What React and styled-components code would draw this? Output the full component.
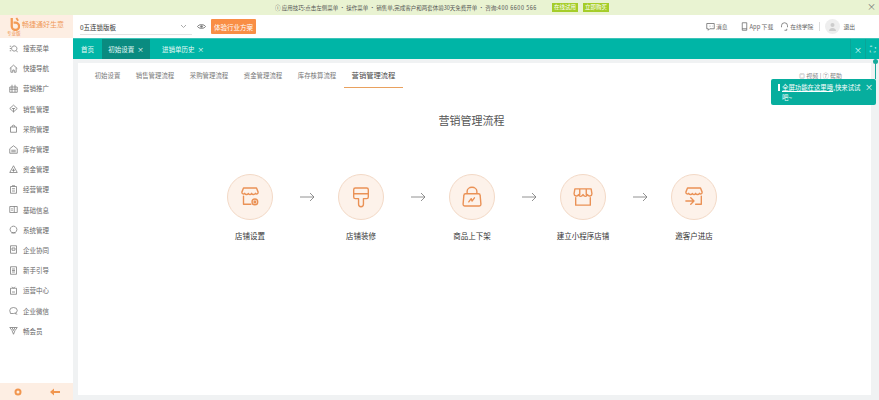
import React from 'react';
import styled, { createGlobalStyle } from 'styled-components';

const Global = createGlobalStyle`
  html, body { margin: 0; padding: 0; width: 879px; height: 400px; overflow: hidden; background: #fff; }
  #root { width: 879px; height: 400px; }
  * { box-sizing: border-box; }
  body { font-family: "Noto Sans CJK SC", "Liberation Sans", sans-serif; color: #333; }
`;

const Page = styled.div`display: flex; flex-direction: column; width: 879px; height: 400px; overflow: hidden; position: relative;`;
const Banner = styled.div`
  height: 15px; background: #e9f3d2; display: flex; align-items: center; flex: none;
  padding-left: 275px; font-size: 5.5px; color: #555; white-space: nowrap; position: relative;
`;
const BannerText = styled.span`width: 277px; flex: none; overflow: hidden;`;
const Phone = styled.span`letter-spacing: .5px;`;
const BannerBtn = styled.span`
  height: 9px; width: 26px; margin-right: 5px; background: #a5cd28; color: #fff; font-size: 5.5px;
  line-height: 9px; text-align: center; display: inline-block;
`;
const BannerClose = styled.span`position: absolute; right: 3px; top: 0; font-size: 9px; line-height: 14px; color: #777;`;
const Body = styled.div`flex: 1; display: flex; min-height: 0;`;
const Side = styled.aside`width: 73px; flex: none; display: flex; flex-direction: column; background: #fff;`;
const Logo = styled.div`
  height: 23px; background: #fdeee3; display: flex; padding: 2px 0 0 9px; position: relative; flex: none;
`;
const LogoTitle = styled.span`font-size: 7px; color: #f09a5a; margin: 3px 0 0 2px; white-space: nowrap; line-height: 9px;`;
const LogoSub = styled.span`position: absolute; left: 7px; top: 14px; font-size: 4.5px; color: #ee8c45; line-height: 8px;`;
const Menu = styled.nav`flex: 1; display: flex; flex-direction: column;`;
const MenuItem = styled.div`
  height: 20.2px; display: flex; align-items: center; padding-left: 9px; gap: 5px; font-size: 6.5px; color: #666; white-space: nowrap;
  svg { width: 9px; height: 9px; flex: none; stroke: #777; fill: none; stroke-width: 1; }
`;
const SideFoot = styled.div`height: 17px; background: #fdeee3; display: flex; align-items: center; justify-content: space-between; padding: 0 13px 0 14px; flex: none;`;
const Main = styled.div`flex: 1; display: flex; flex-direction: column; min-width: 0; background: #f0f2f3;`;
const Header = styled.header`height: 23px; background: #fff; display: flex; align-items: center; flex: none; padding-left: 7px; position: relative;`;
const Select = styled.div`
  width: 112px; height: 15px; border-bottom: 1px solid #e3e3e3; font-size: 6.5px; color: #333; display: flex; align-items: center; justify-content: space-between; padding: 0 5px 0 0; margin-top: 1px;
`;
const EyeIcon = styled.svg`margin-left: 5px; flex: none;`;
const Trial = styled.button`
  margin-left: 5px; width: 45px; height: 15px; background: #f98e45; border: 0; border-radius: 1px; color: #fff; font: 6.5px "Noto Sans CJK SC", sans-serif; padding: 0;
`;
const HeadRight = styled.div`margin-left: auto; display: flex; align-items: center; font-size: 5.8px; color: #666; padding-right: 24px;`;
const HeadItem = styled.span`display: flex; align-items: center; gap: ${p => p.$gap || 1}px; margin-right: ${p => p.$mr}px; white-space: nowrap; svg { width: 9px; height: 9px; stroke: #666; fill: none; stroke-width: 1; }`;
const Divider = styled.span`width: 1px; height: 9px; background: #ddd; margin-right: 5px;`;
const Avatar = styled.span`width: 15px; height: 15px; border-radius: 50%; background: #eee; margin-right: 3px; display: flex; align-items: center; justify-content: center;`;
const TabBar = styled.div`height: 21px; background: #00b5a6; display: flex; align-items: stretch; flex: none; border-top: 1px solid #3cc4b8; color: #e8fbf8; font-size: 6.5px;`;
const Tab = styled.div`
  display: flex; align-items: center; justify-content: center; width: ${p => p.$w}px; background: ${p => p.$on ? '#0a8b80' : 'transparent'}; gap: 3px; white-space: nowrap;
`;
const TabTools = styled.div`margin-left: auto; display: flex; align-items: stretch;`;
const Tool = styled.div`width: ${p => p.$w}px; display: flex; align-items: center; justify-content: center; border-left: 1px solid #0aa598; font-size: 8px; color: #dff;`;
const Content = styled.div`flex: 1; padding: 4px 8px 5px 5px; display: flex; min-height: 0; position: relative;`;
const Panel = styled.section`flex: 1; background: #fff; position: relative; display: flex; flex-direction: column;`;
const SubTabs = styled.div`display: flex; height: 25px; padding-left: 9px; align-items: stretch; flex: none;`;
const SubTab = styled.div`
  width: ${p => p.$w}px; font-size: ${p => p.$on ? 7.3 : 6.4}px; color: ${p => p.$on ? '#444' : '#777'}; display: flex; align-items: center; justify-content: center; white-space: nowrap;
  border-bottom: 1px solid ${p => p.$on ? '#e9a15f' : 'transparent'};
`;
const Title = styled.h2`margin: 25px 0 0; font-weight: 400; font-size: 11px; line-height: 15px; text-align: center; color: #555; padding-right: 6px; flex: none;`;
const Flow = styled.div`display: flex; justify-content: flex-start; margin-top: 46px; padding-left: 137px;`;
const Step = styled.div`width: 70px; display: flex; flex-direction: column; align-items: center; flex: none;`;
const Circle = styled.div`width: 46px; height: 46px; border-radius: 50%; background: #fdf2ea; border: 1px solid #f3d9c6; display: flex; align-items: center; justify-content: center; svg { width: 26px; height: 26px; fill: none; stroke: #ea9155; stroke-width: 1.7; stroke-linejoin: round; stroke-linecap: round; }`;
const StepLabel = styled.div`margin-top: 10px; font-size: 7.5px; line-height: 11px; color: #333; white-space: nowrap;`;
const Arrow = styled.div`width: 41px; height: 46px; padding-left: 3px; display: flex; align-items: center; justify-content: center; flex: none; svg { width: 15px; height: 10px; fill: none; stroke: #777; stroke-width: .8; }`;
const PanelTools = styled.div`position: absolute; right: 29px; top: 9px; font-size: 6px; line-height: 7px; color: #888; white-space: nowrap;`;
const Tip = styled.div`
  position: absolute; left: 771px; top: 79px; width: 105px; height: 26px; background: #07ae9e; border-radius: 2px; color: #fff; font-size: 6.4px; line-height: 9.500px; padding: 4px 10px 0 11px; z-index: 2;
  &::before { content: ''; position: absolute; left: 7px; top: 5px; width: 2px; height: 7px; background: #fff; }
`;
const TipRow = styled.div`white-space: nowrap;`;
const TipLink = styled.span`text-decoration: underline;`;
const TipClose = styled.span`position: absolute; right: 3px; top: 3px; font-size: 8px;`;
const TipLine = styled.span`position: absolute; left: 875px; top: 61px; width: 1px; height: 18px; background: #16a99b; z-index: 2;`;
const TipDot = styled.span`position: absolute; left: 873px; top: 59px; width: 5px; height: 5px; border-radius: 50%; background: #16a99b; z-index: 2;`;

const Ic = ({ d }) => <svg viewBox="0 0 12 12"><path d={d} /></svg>;
const menu = [
  ['搜索菜单', 'M1 3h2M1 6h2M1 9h2M7 2.500a3.500 3.500 0 1 1-.01 0M9.500 8.500l2 2.500'],
  ['快捷导航', 'M1 6l5-4.500L11 6M2.500 5v6h2.500V8h2v3h2.500V5'],
  ['营销推广', 'M1 4h10v7H1zM4 1v10M8 1v10M1 7h10'],
  ['销售管理', 'M1 6l5-4.500L11 6l-5 4.500zM4 6h4M6 6v5'],
  ['采购管理', 'M2 4h8v7H2zM4 4a2 2.500 0 0 1 4 0'],
  ['库存管理', 'M1 5l5-4 5 4v6H1zM3 7h6M3 9h6'],
  ['资金管理', 'M6 1l5 9H1zM4 7h4M6 5v4'],
  ['经营管理', 'M2 2h8v9H2zM4 5h4M4 8h4M4 1h4'],
  ['基础信息', 'M1 2h10v8H1zM3 5h2M3 7h2M7 2v8'],
  ['系统管理', 'M6 1.500a4.500 4.500 0 1 1-.01 0M3 10.500h6'],
  ['企业协同', 'M2 1h8v10H2zM4 4h4v3H4z'],
  ['新手引导', 'M2 1h8v10H2zM4 4h4M4 6h4M4 8h4'],
  ['运营中心', 'M2 3h8v8H2zM4 1l2 2 2-2M4 8h4'],
  ['企业微信', 'M1 6a5 4 0 1 1 5 4H2zM8 10l3 1'],
  ['畅会员', 'M1 2h10L8 6l-2 5-2-5zM4 2l2 4 2-4'],
];
const Store = () => <path d="M6 10L8 5h16l2 5c0 2.500-2 3-3.300 1.500C21.500 13.500 19 13.500 18 11.500c-1 2-3.500 2-4 0-1 2-3.500 2-4.500 0C8.500 13 6 12.500 6 10z" />;
const icons = [
  <svg viewBox="0 0 32 32" key="a"><Store /><path d="M8 15v10h9" /><circle cx="22" cy="22" r="3.500" /><circle cx="22" cy="22" r="1" /></svg>,
  <svg viewBox="0 0 32 32" key="b"><path d="M7 7a2 2 0 0 1 2-2h14a2 2 0 0 1 2 2v9a2 2 0 0 1-2 2h-4v7a3 3 0 0 1-6 0v-7H9a2 2 0 0 1-2-2zM7 12h18" /></svg>,
  <svg viewBox="0 0 32 32" key="c"><path d="M8 12h16a2 2 0 0 1 2 2l1 11a2 2 0 0 1-2 2H7a2 2 0 0 1-2-2l1-11a2 2 0 0 1 2-2zM10 12V9a6 5 0 0 1 12 0v3M12 22l3-4 1 3 3-4" /></svg>,
  <svg viewBox="0 0 32 32" key="d"><path d="M6 6h20l1 6c0 3-4 4-5.500 1-1 3-4 3-5.500 0-1.500 3-4.500 3-5.500 0C9.500 16 5 15 5 12zM12 6v7M20 6v7M7 17v9h18v-9" /></svg>,
  <svg viewBox="0 0 32 32" key="e"><Store /><path d="M25 15v10H18M6 21h10M12 17l4 4-4 4" /></svg>,
];
const steps = ['店铺设置', '店铺装修', '商品上下架', '建立小程序店铺', '邀客户进店'];

export default function App() {
  return (
    <Page>
      <Global />
      <Banner>
        <BannerText>ⓘ 应用技巧:点击左侧菜单 • 操作菜单 • 销售单,完成客户和两套体验30天免费开单 • 咨询:<Phone>400 6600 566</Phone></BannerText>
        <BannerBtn>在线试用</BannerBtn>
        <BannerBtn>立即购买</BannerBtn>
        <BannerClose>×</BannerClose>
      </Banner>
      <Body>
        <Side>
          <Logo>
            <svg width="11" height="14" viewBox="0 0 12 15"><path d="M3 1v9a4 4 0 1 0 4-4H5" fill="none" stroke="#f39a55" strokeWidth="2.500" /><path d="M8 1l2 3" stroke="#f39a55" strokeWidth="2" /></svg>
            <LogoTitle>畅捷通好生意</LogoTitle>
            <LogoSub>专业版</LogoSub>
          </Logo>
          <Menu>
            {menu.map(([t, d]) => <MenuItem key={t}><Ic d={d} />{t}</MenuItem>)}
          </Menu>
          <SideFoot>
            <svg width="8" height="8" viewBox="0 0 8 8"><circle cx="4" cy="4" r="2.500" fill="none" stroke="#f1964f" strokeWidth="2" /></svg>
            <svg width="10" height="8" viewBox="0 0 10 8"><path d="M0 4l4-3.500V7.500zM4 3h6v2H4z" fill="#f1964f" /></svg>
          </SideFoot>
        </Side>
        <Main>
          <Header>
            <Select>
              0五连锁版板
              <svg width="7" height="5" viewBox="0 0 7 5"><path d="M1 1l2.500 2.500L6 1" fill="none" stroke="#aaa" /></svg>
            </Select>
            <EyeIcon width="9" height="9" viewBox="0 0 9 9"><path d="M.5 4.500C2 2 7 2 8.500 4.500 7 7 2 7 .5 4.500z" fill="none" stroke="#777" /><circle cx="4.500" cy="4.500" r="1.300" fill="#777" /></EyeIcon>
            <Trial>体验行业方案</Trial>
            <HeadRight>
              <HeadItem $mr={12}><svg viewBox="0 0 12 12"><path d="M1 2h10v7H5l-2 2V9H1zM4 5.500h.5M6 5.500h.5M8 5.500h.5" /></svg>消息</HeadItem>
              <HeadItem $mr={7}><svg viewBox="0 0 12 12"><path d="M3 1h6v10H3zM3 9h6" /></svg>App 下载</HeadItem>
              <HeadItem $mr={6}><svg viewBox="0 0 12 12"><path d="M2 7V5a4 4 0 0 1 8 0v2M6 11h3v-2" /></svg>在线学院</HeadItem>
              <Divider />
              <Avatar><svg width="9" height="9" viewBox="0 0 9 9"><circle cx="4.500" cy="3" r="2" fill="#ccc" /><path d="M1 9c0-4 7-4 7 0z" fill="#ccc" /></svg></Avatar>
              退出
            </HeadRight>
          </Header>
          <TabBar>
            <Tab $w={29}>首页</Tab>
            <Tab $w={48} $on>初始设置 <span>×</span></Tab>
            <Tab $w={66}>进销单历史 <span>×</span></Tab>
            <TabTools><Tool $w={15}>×</Tool><Tool $w={14}>⛶</Tool></TabTools>
          </TabBar>
          <Content>
            <Panel>
              <SubTabs>
                <SubTab $w={41}>初始设置</SubTab>
                <SubTab $w={54}>销售管理流程</SubTab>
                <SubTab $w={54}>采购管理流程</SubTab>
                <SubTab $w={54}>资金管理流程</SubTab>
                <SubTab $w={54}>库存核算流程</SubTab>
                <SubTab $w={59} $on>营销管理流程</SubTab>
              </SubTabs>
              <Title>营销管理流程</Title>
              <Flow>
                {steps.map((s, i) => (
                  <React.Fragment key={s}>
                    <Step><Circle>{icons[i]}</Circle><StepLabel>{s}</StepLabel></Step>
                    {i < 4 && <Arrow><svg viewBox="0 0 15 10"><path d="M0 5h14M10 1l4 4-4 4" /></svg></Arrow>}
                  </React.Fragment>
                ))}
              </Flow>
              <PanelTools>◎ 视频 | ⑦ 帮助</PanelTools>
            </Panel>
          </Content>
        </Main>
      </Body>
      <TipDot /><TipLine />
      <Tip>
        <TipRow><TipLink>全屏功能在这里哦</TipLink>,快来试试</TipRow>
        <TipRow>吧~</TipRow>
        <TipClose>×</TipClose>
      </Tip>
    </Page>
  );
}
